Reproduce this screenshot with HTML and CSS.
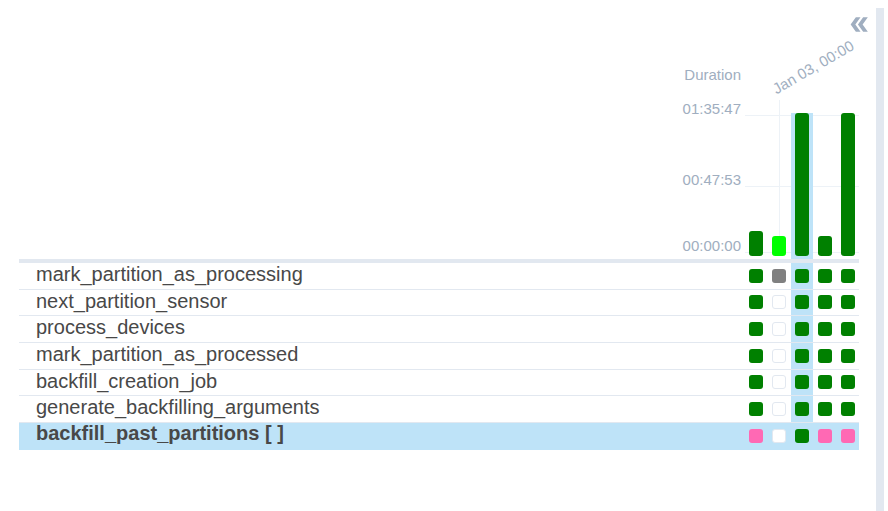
FILE: index.html
```html
<!DOCTYPE html>
<html>
<head>
<meta charset="utf-8">
<link rel="stylesheet" href="styles.css">
</head>
<body>
<div class="page">
  <div class="panel">
    <div class="toolbar">
      <svg class="collapse" viewBox="0 0 24 24" width="25" height="25" aria-label="collapse">
        <path d="M8.5 5H13l-5 7 5 7H8.5l-5-7z"/>
        <path d="M15.5 5H20l-5 7 5 7h-4.5l-5-7z"/>
      </svg>
    </div>
    <div class="table">
      <div class="header">
        <div class="hdr-left">
          <div class="axis-title">Duration</div>
          <div class="tick t1">01:35:47</div>
          <div class="tick t2">00:47:53</div>
          <div class="tick t3">00:00:00</div>
        </div>
        <div class="hdr-right">
          <div class="date-area"><span class="date">Jan 03, 00:00</span></div>
          <div class="chart">
            <div class="bars">
              <div class="bcol"><div class="bar green" style="height:25px"></div></div>
              <div class="bcol"><div class="bar lime" style="height:20px"></div></div>
              <div class="bcol sel"><div class="bar green" style="height:143px"></div></div>
              <div class="bcol"><div class="bar green" style="height:20px"></div></div>
              <div class="bcol"><div class="bar green" style="height:143px"></div></div>
            </div>
          </div>
        </div>
      </div>

      <div class="row">
        <div class="name">mark_partition_as_processing</div>
        <div class="cells">
          <div class="cell"><span class="sq green"></span></div>
          <div class="cell"><span class="sq gray"></span></div>
          <div class="cell sel"><span class="sq green"></span></div>
          <div class="cell"><span class="sq green"></span></div>
          <div class="cell"><span class="sq green"></span></div>
        </div>
      </div>
      <div class="row">
        <div class="name">next_partition_sensor</div>
        <div class="cells">
          <div class="cell"><span class="sq green"></span></div>
          <div class="cell"><span class="sq empty"></span></div>
          <div class="cell sel"><span class="sq green"></span></div>
          <div class="cell"><span class="sq green"></span></div>
          <div class="cell"><span class="sq green"></span></div>
        </div>
      </div>
      <div class="row">
        <div class="name">process_devices</div>
        <div class="cells">
          <div class="cell"><span class="sq green"></span></div>
          <div class="cell"><span class="sq empty"></span></div>
          <div class="cell sel"><span class="sq green"></span></div>
          <div class="cell"><span class="sq green"></span></div>
          <div class="cell"><span class="sq green"></span></div>
        </div>
      </div>
      <div class="row">
        <div class="name">mark_partition_as_processed</div>
        <div class="cells">
          <div class="cell"><span class="sq green"></span></div>
          <div class="cell"><span class="sq empty"></span></div>
          <div class="cell sel"><span class="sq green"></span></div>
          <div class="cell"><span class="sq green"></span></div>
          <div class="cell"><span class="sq green"></span></div>
        </div>
      </div>
      <div class="row">
        <div class="name">backfill_creation_job</div>
        <div class="cells">
          <div class="cell"><span class="sq green"></span></div>
          <div class="cell"><span class="sq empty"></span></div>
          <div class="cell sel"><span class="sq green"></span></div>
          <div class="cell"><span class="sq green"></span></div>
          <div class="cell"><span class="sq green"></span></div>
        </div>
      </div>
      <div class="row">
        <div class="name">generate_backfilling_arguments</div>
        <div class="cells">
          <div class="cell"><span class="sq green"></span></div>
          <div class="cell"><span class="sq empty"></span></div>
          <div class="cell sel"><span class="sq green"></span></div>
          <div class="cell"><span class="sq green"></span></div>
          <div class="cell"><span class="sq green"></span></div>
        </div>
      </div>
      <div class="row active">
        <div class="name">backfill_past_partitions [ ]</div>
        <div class="cells">
          <div class="cell"><span class="sq pink"></span></div>
          <div class="cell"><span class="sq white"></span></div>
          <div class="cell"><span class="sq green"></span></div>
          <div class="cell"><span class="sq pink"></span></div>
          <div class="cell"><span class="sq pink"></span></div>
        </div>
      </div>
    </div>
  </div>
  <div class="strip"></div>
</div>
</body>
</html>
```

FILE: styles.css
```css
* { box-sizing: border-box; }

html, body { background: #fff; }

body {
  margin: 8px 4px 0 8px;
  font-family: "Liberation Sans", Arial, sans-serif;
  color: #484848;
}

.page {
  display: flex;
  height: 503px;
}

.panel {
  flex: 1;
  display: flex;
  flex-direction: column;
  min-width: 0;
}

.strip {
  width: 8px;
  background: #e2e8f0;
}

.toolbar {
  height: 28px;
  display: flex;
  justify-content: flex-end;
  align-items: flex-start;
  padding-right: 4px;
}

.collapse {
  margin-top: 4px;
  fill: #a0aec0;
  display: block;
}

.table {
  margin: 0 17px 0 11px;
}

.header {
  display: flex;
  border-bottom: 4px solid #e2e8f0;
  height: 227px;
}

.hdr-left {
  flex: 1;
  display: flex;
  flex-direction: column;
  align-items: flex-end;
  padding: 30px 4px 0 0;
  font-size: 15px;
  line-height: 17px;
  color: #a0aec0;
}

.axis-title { height: 17px; }
.tick { height: 17px; }
.t1 { margin-top: 17px; }
.t2 { margin-top: 54px; }
.t3 { margin-top: 49px; }

.hdr-right {
  width: 114px;
  display: flex;
  flex-direction: column;
}

.date-area {
  height: 64px;
  padding: 44px 0 0 33px;
}

.date {
  display: block;
  width: 91px;
  height: 17px;
  font-size: 15px;
  line-height: 17px;
  white-space: nowrap;
  color: #a0aec0;
  transform-origin: 0 100%;
  transform: rotate(-30deg);
}

.chart {
  height: 159px;
  background:
    linear-gradient(#edf2f7, #edf2f7) 0 15px / 100% 1px no-repeat,
    linear-gradient(#edf2f7, #edf2f7) 0 86px / 100% 1px no-repeat,
    linear-gradient(#edf2f7, #edf2f7) 0 152px / 100% 1px no-repeat,
    linear-gradient(#edf2f7, #edf2f7) 34px 0 / 1px 153px no-repeat;
}

.bars {
  display: flex;
  gap: 1px;
  height: 100%;
  align-items: flex-end;
}

.bcol {
  width: 22px;
  padding: 0 4px 3px;
}

.bcol.sel { background: #bee3f8; }

.bar {
  width: 14px;
  border-radius: 3px;
}

.row {
  display: flex;
  align-items: flex-start;
  height: 26.667px;
  border-bottom: 1px solid #e2e8f0;
}

.row.active {
  background: #bee3f8;
  border-bottom: none;
}

.row.active .name {
  font-weight: bold;
  margin-top: -1px;
}

.name {
  flex: 1;
  padding-left: 17px;
  font-size: 20px;
  line-height: 22px;
  white-space: nowrap;
}

.cells {
  display: flex;
  gap: 1px;
  height: 100%;
}

.cell {
  width: 22px;
  display: flex;
  align-items: center;
  padding-left: 4px;
}

.cell.sel { background: #bee3f8; }

.sq {
  display: block;
  width: 14px;
  height: 14px;
  border-radius: 3px;
}

.green { background: #008000; }
.lime { background: #00ff00; }
.gray { background: #808080; }
.pink { background: #ff69b4; }
.empty { background: #fff; border: 1px solid #e2e8f0; }
.white { background: #fff; border: 1px solid #e2e8f0; }
```
